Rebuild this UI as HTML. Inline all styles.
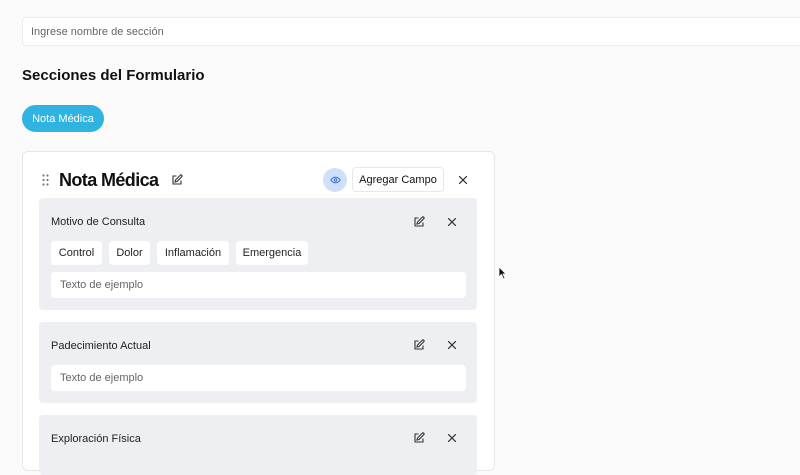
<!DOCTYPE html>
<html><head><meta charset="utf-8"><style>
*{box-sizing:border-box;margin:0;padding:0}
body{width:800px;height:450px;overflow:hidden;background:#fafafa;font-family:"Liberation Sans",sans-serif;color:#111;position:relative}
.abs{position:absolute}
.inp{background:#fff;border:1px solid #ececec;border-radius:4px;color:#666;font-size:11px;display:flex;align-items:center;padding-left:8px}
.field{position:absolute;left:39px;width:438px;background:#eeeff2;border-radius:4px}
.lbl{position:absolute;left:12px;font-size:11px;color:#222}
.chip{position:absolute;top:43px;height:24px;background:#fff;border-radius:4px;font-size:11px;display:flex;align-items:center;justify-content:center;color:#222}
svg{position:absolute}
</style></head><body>
<div class="abs inp" style="left:22px;top:17px;width:800px;height:29px">Ingrese nombre de sección</div>
<div class="abs" style="left:22px;top:67px;font-size:15px;font-weight:bold">Secciones del Formulario</div>
<div class="abs" style="left:22px;top:105px;width:82px;height:27px;border-radius:14px;background:#2fb3e0;color:#fff;font-size:11px;display:flex;align-items:center;justify-content:center">Nota Médica</div>
<div class="abs" style="left:22px;top:151px;width:473px;height:320px;background:#fff;border:1px solid #e6e6e6;border-radius:6px"></div>
<svg style="left:42px;top:174px" width="8" height="12"><g fill="#777"><circle cx="1.5" cy="1.5" r="1.1"/><circle cx="5.5" cy="1.5" r="1.1"/><circle cx="1.5" cy="6" r="1.1"/><circle cx="5.5" cy="6" r="1.1"/><circle cx="1.5" cy="10.5" r="1.1"/><circle cx="5.5" cy="10.5" r="1.1"/></g></svg>
<div class="abs" style="left:59px;top:170px;font-size:18px;font-weight:bold;letter-spacing:-0.6px">Nota Médica</div>
<svg style="left:171px;top:174px" width="12" height="12" viewBox="0 0 24 24" fill="none" stroke="#333" stroke-width="2.2"><path d="M11 4H4v16h16v-7"/><path d="M18.5 2.5a2.1 2.1 0 013 3L12 15l-4 1 1-4z"/></svg>
<div class="abs" style="left:323px;top:168px;width:24px;height:24px;border-radius:50%;background:#cfe0fb"></div>
<svg style="left:330px;top:175px" width="11" height="10" viewBox="0 0 24 24" fill="none" stroke="#3b6fd6" stroke-width="2.4"><path d="M1 12s4-7 11-7 11 7 11 7-4 7-11 7S1 12 1 12z"/><circle cx="12" cy="12" r="3"/></svg>
<div class="abs" style="left:352px;top:167px;width:92px;height:25px;border:1px solid #e8e8e8;border-radius:4px;background:#fff;font-size:11px;display:flex;align-items:center;justify-content:center">Agregar Campo</div>
<svg style="left:459px;top:176px" width="8" height="8" viewBox="0 0 8 8" stroke="#333" stroke-width="1.2"><path d="M0 0L8 8M8 0L0 8"/></svg>

<div class="field" style="top:198px;height:112px">
<div class="lbl" style="top:18px">Motivo de Consulta</div>
<div class="chip" style="left:12px;width:51px">Control</div>
<div class="chip" style="left:70px;width:41px">Dolor</div>
<div class="chip" style="left:118px;width:72px">Inflamación</div>
<div class="chip" style="left:197px;width:72px">Emergencia</div>
<div class="abs inp" style="left:12px;top:74px;width:415px;height:26px;border-color:#fff">Texto de ejemplo</div>
</div>
<div class="field" style="top:322px;height:81px">
<div class="lbl" style="top:18px">Padecimiento Actual</div>
<div class="abs inp" style="left:12px;top:43px;width:415px;height:26px;border-color:#fff">Texto de ejemplo</div>
</div>
<div class="field" style="top:415px;height:60px">
<div class="lbl" style="top:18px">Exploración Física</div>
</div>
<svg style="left:413px;top:216px" width="12" height="12" viewBox="0 0 24 24" fill="none" stroke="#333" stroke-width="2.2"><path d="M11 4H4v16h16v-7"/><path d="M18.5 2.5a2.1 2.1 0 013 3L12 15l-4 1 1-4z"/></svg>
<svg style="left:448px;top:218px" width="8" height="8" viewBox="0 0 8 8" stroke="#333" stroke-width="1.2"><path d="M0 0L8 8M8 0L0 8"/></svg>
<svg style="left:413px;top:339px" width="12" height="12" viewBox="0 0 24 24" fill="none" stroke="#333" stroke-width="2.2"><path d="M11 4H4v16h16v-7"/><path d="M18.5 2.5a2.1 2.1 0 013 3L12 15l-4 1 1-4z"/></svg>
<svg style="left:448px;top:341px" width="8" height="8" viewBox="0 0 8 8" stroke="#333" stroke-width="1.2"><path d="M0 0L8 8M8 0L0 8"/></svg>
<svg style="left:413px;top:432px" width="12" height="12" viewBox="0 0 24 24" fill="none" stroke="#333" stroke-width="2.2"><path d="M11 4H4v16h16v-7"/><path d="M18.5 2.5a2.1 2.1 0 013 3L12 15l-4 1 1-4z"/></svg>
<svg style="left:448px;top:434px" width="8" height="8" viewBox="0 0 8 8" stroke="#333" stroke-width="1.2"><path d="M0 0L8 8M8 0L0 8"/></svg>
<svg style="left:498px;top:266px" width="9" height="14" viewBox="0 0 9 14"><path d="M1 1L1 11L3.5 8.5L5.5 13L7 12.3L5 8L8 8Z" fill="#111" stroke="#fff" stroke-width="0.8"/></svg>
</body></html>
